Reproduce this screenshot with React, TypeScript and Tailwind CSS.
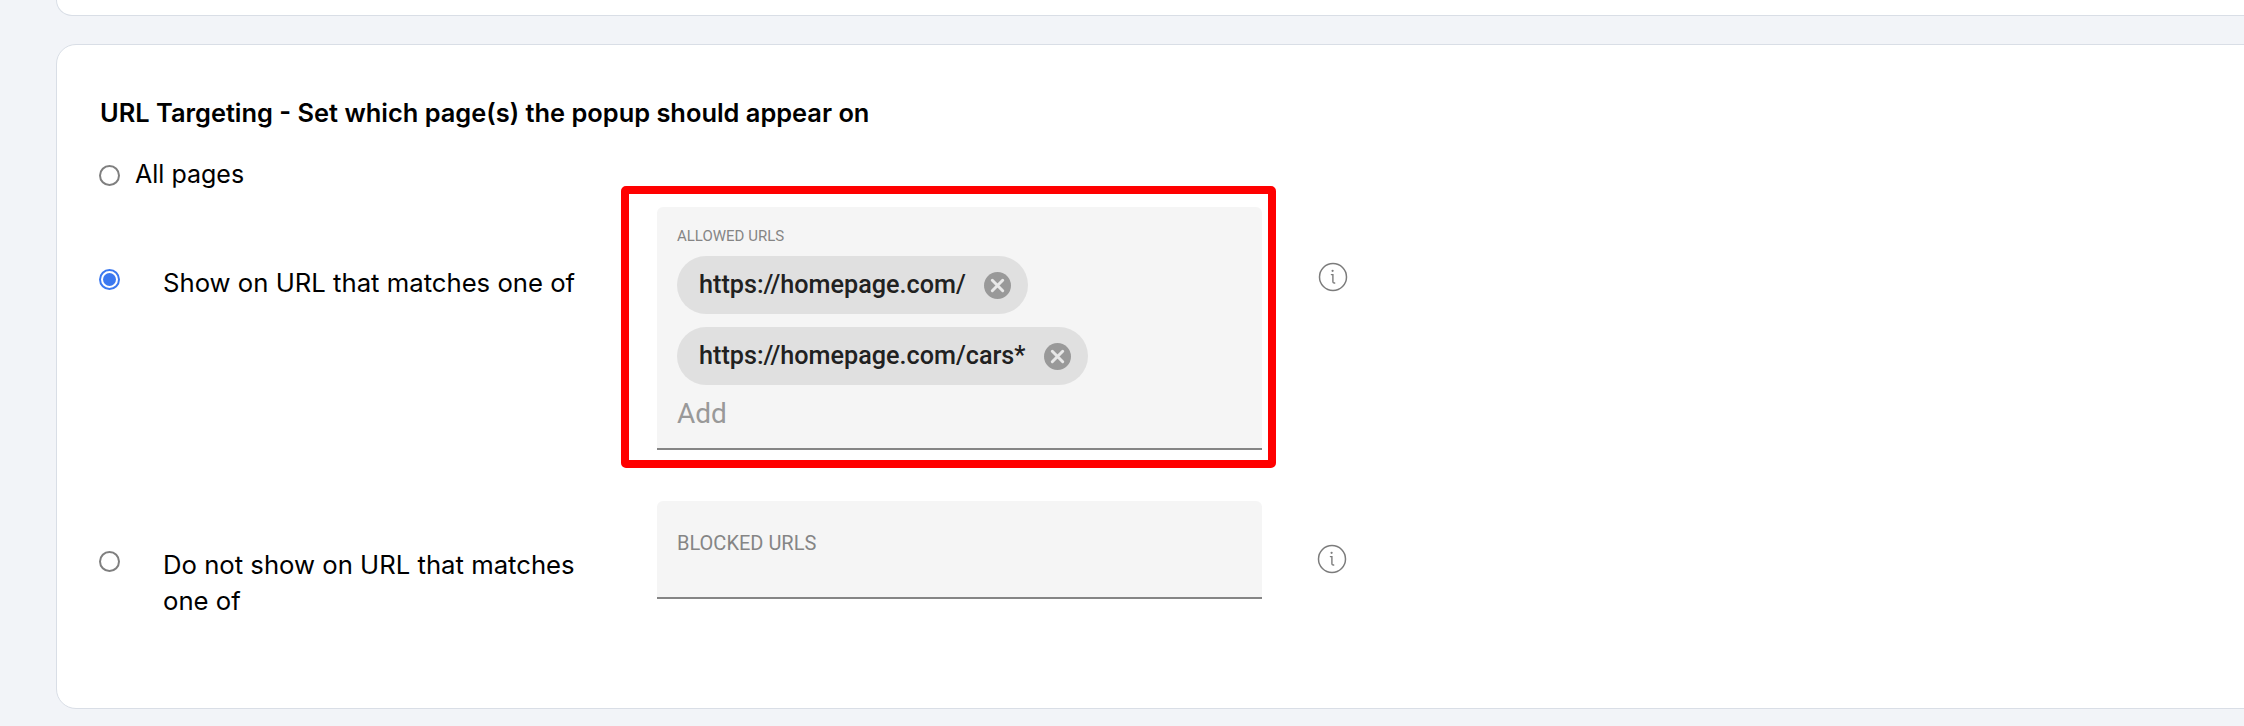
const sans = "font-['Inter',sans-serif]";

function Radio({ checked }: { checked?: boolean }) {
  return (
    <span
      className={
        checked
          ? "flex h-[21px] w-[21px] shrink-0 items-center justify-center rounded-full border-2 border-[#3b78f0] bg-white"
          : "block h-[21px] w-[21px] shrink-0 rounded-full border-2 border-[#7f7f7f] bg-white"
      }
    >
      {checked && <span className="block h-[13px] w-[13px] rounded-full bg-[#3b78f0]" />}
    </span>
  );
}

function InfoIcon() {
  return (
    <svg width="30" height="30" viewBox="0 0 30 30" fill="none" className="shrink-0">
      <circle cx="15" cy="15" r="13.5" stroke="#7c7c7c" strokeWidth="1.5" />
      <circle cx="14.6" cy="8.8" r="1.1" fill="#7c7c7c" />
      <path d="M13.4 12.6h1.5v7c0 1 .6 1.6 1.8 1.4" stroke="#7c7c7c" strokeWidth="1.4" strokeLinecap="round" />
    </svg>
  );
}

function Chip({ label }: { label: string }) {
  return (
    <div className="flex h-[58px] w-fit items-center gap-[18px] rounded-full bg-[#e0e0e0] pl-[22px] pr-[17px]">
      <span className="font-['Roboto',sans-serif] text-[25.2px] font-medium text-[#212121]">{label}</span>
      <svg width="27" height="27" viewBox="0 0 27 27" className="shrink-0">
        <circle cx="13.5" cy="13.5" r="13.5" fill="#999999" />
        <path d="M8.3 8.3l10.4 10.4M18.7 8.3L8.3 18.7" stroke="#e8e8e8" strokeWidth="3" strokeLinecap="round" />
      </svg>
    </div>
  );
}

export default function App() {
  return (
    <div className={`h-[726px] w-[2244px] overflow-hidden bg-[#f2f4f8] ${sans}`}>
      <div className="ml-[56px] h-[16px] w-[2300px] rounded-b-[20px] border border-t-0 border-[#d9dee6] bg-white" />

      <div className="ml-[56px] mt-[28px] h-[665px] w-[2300px] rounded-[20px] border border-[#d9dee6] bg-white pl-[42px] pt-[50px] text-black">
        <h2 className="ml-[1px] text-[25.4px] font-semibold leading-[36px]">URL Targeting - Set which page(s) the popup should appear on</h2>

        <div className="mt-[26px] flex h-[36px] items-center gap-[15px]">
          <Radio />
          <span className="text-[25px]">All pages</span>
        </div>

        <div className="-mt-[7px] flex items-start">
          <div className="flex w-[522px] items-start pt-[83px]">
            <div className="w-[64px]">
              <Radio checked />
            </div>
            <span className="-mt-[4px] text-[25.7px] leading-[36px]">Show on URL that matches one of</span>
          </div>
          <div className="w-[655px] rounded-[5px] border-[8px] border-[#ff0000] pb-[10px] pl-[28px] pr-[6px] pt-[13px]">
            <div className="h-[243px] rounded-t-[6px] border-b-2 border-[#858585] bg-[#f5f5f5] px-[20px] pt-[20px] font-['Roboto',sans-serif]">
              <div className="text-[15px] leading-[18px] text-[#858585]">ALLOWED URLS</div>
              <div className="mt-[11px] flex flex-col gap-[13px]">
                <Chip label="https://homepage.com/" />
                <Chip label="https://homepage.com/cars*" />
              </div>
              <div className="mt-[10px] text-[28px] leading-[38px] text-[#999999]">Add</div>
            </div>
          </div>
          <div className="ml-[42px] mt-[76px]">
            <InfoIcon />
          </div>
        </div>

        <div className="mt-[33px] flex items-start">
          <div className="flex w-[558px] items-start">
            <div className="w-[64px] pt-[50px]">
              <Radio />
            </div>
            <span className="w-[440px] pt-[46px] text-[25.7px] leading-[36px]">Do not show on URL that matches one of</span>
          </div>
          <div className="h-[98px] w-[605px] rounded-t-[6px] border-b-2 border-[#858585] bg-[#f5f5f5] px-[20px] pt-[30px] font-['Roboto',sans-serif] text-[20px] leading-[24px] text-[#858585]">
            BLOCKED URLS
          </div>
          <div className="ml-[55px] mt-[43px]">
            <InfoIcon />
          </div>
        </div>
      </div>
    </div>
  );
}
